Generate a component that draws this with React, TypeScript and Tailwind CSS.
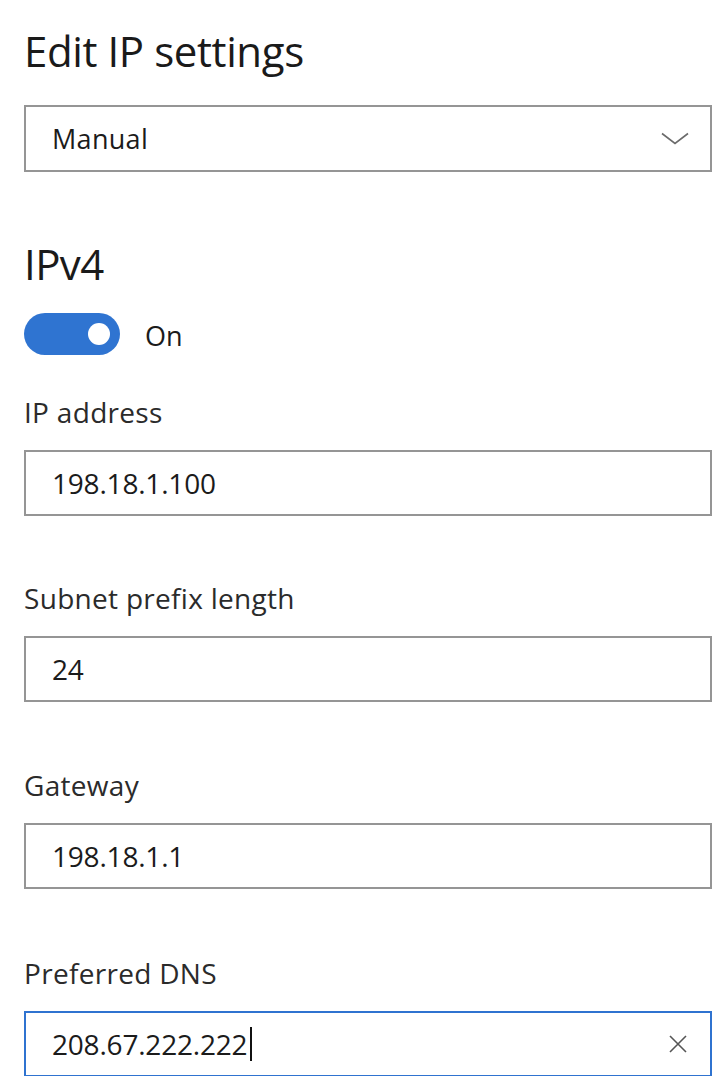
import React from "react";

const font = { fontFamily: '"Open Sans", "Noto Sans", sans-serif' };

function Field({
  label,
  value,
  labelGap,
  focused = false,
}: {
  label: string;
  value: string;
  labelGap: string;
  focused?: boolean;
}) {
  return (
    <div className={labelGap}>
      <div className="h-[28px] text-[28px] leading-[28px] text-[#2b2b2b] tracking-[0.3px]">
        {label}
      </div>
      <div
        className={
          "mt-[24px] flex h-[66px] w-[688px] items-center border-2 pl-[26px] pr-[20px] " +
          (focused ? "border-[#2f73d0]" : "border-[#959595]")
        }
      >
        <span className="text-[28px] leading-[28px] text-[#1b1b1b] tracking-[-0.2px]">
          {value}
        </span>
        {focused && <span className="ml-[3px] h-[34px] w-[2px] bg-[#111]" />}
        {focused && (
          <svg
            className="ml-auto mr-[2px]"
            width="20"
            height="20"
            viewBox="0 0 20 20"
            fill="none"
            stroke="#555"
            strokeWidth="1.6"
          >
            <path d="M2 2 L18 18 M18 2 L2 18" />
          </svg>
        )}
      </div>
    </div>
  );
}

export default function App() {
  return (
    <div className="min-h-screen bg-white pl-[24px] pt-[30px]" style={font}>
      <h1 className="h-[42px] text-[42px] leading-[42px] font-normal text-[#1a1a1a] tracking-[-0.4px]">
        Edit IP settings
      </h1>

      <div className="mt-[33px] flex h-[67px] w-[688px] items-center border-2 border-[#959595] pl-[26px] pr-[20px]">
        <span className="text-[27px] leading-[28px] text-[#1b1b1b] tracking-[0.3px]">
          Manual
        </span>
        <svg
          className="ml-auto"
          width="30"
          height="13"
          viewBox="0 0 30 13"
          fill="none"
          stroke="#6b6b6b"
          strokeWidth="1.6"
        >
          <path d="M2 1.5 L15 11.5 L28 1.5" />
        </svg>
      </div>

      <h2 className="mt-[71px] h-[42px] text-[42px] leading-[42px] font-normal text-[#1a1a1a] tracking-[-0.6px]">
        IPv4
      </h2>

      <div className="mt-[28px] flex items-center">
        <div className="flex h-[42px] w-[96px] items-center justify-end rounded-full bg-[#2f74d1] pr-[10px]">
          <div className="h-[22px] w-[22px] rounded-full bg-white" />
        </div>
        <span className="ml-[25px] mt-[4px] text-[27px] leading-[28px] text-[#1b1b1b]">
          On
        </span>
      </div>

      <Field label="IP address" value="198.18.1.100" labelGap="mt-[43px]" />
      <Field label="Subnet prefix length" value="24" labelGap="mt-[68px]" />
      <Field label="Gateway" value="198.18.1.1" labelGap="mt-[69px]" />
      <Field
        label="Preferred DNS"
        value="208.67.222.222"
        labelGap="mt-[70px]"
        focused
      />
    </div>
  );
}
